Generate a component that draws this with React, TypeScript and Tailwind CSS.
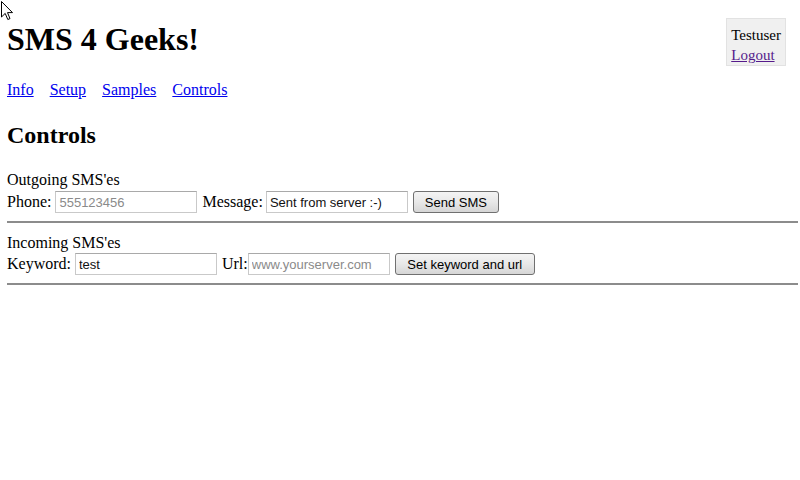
import React from 'react';

const inputCls =
  "h-[22px] w-[142px] border border-[#c9c9c9] border-t-[#a9a9a9] bg-white px-[3px] text-[13px] text-[#111] font-['Liberation_Sans',Arial,sans-serif] placeholder:text-[#8a8a8a] outline-none";

const buttonCls =
  "h-[22px] rounded-[3px] border border-[#707070] bg-gradient-to-b from-[#f4f4f4] via-[#e8e8e8] to-[#d6d6d6] text-[13px] text-black font-['Liberation_Sans',Arial,sans-serif] leading-none";

const Cursor = () => (
  <svg className="absolute left-[1px] top-[1px]" width="13" height="20" viewBox="0 0 13 20">
    <path d="M0.5 0.5 L0.5 16 L4.2 12.4 L6.8 18.5 L9 17.6 L6.5 11.6 L11.5 11.6 Z" fill="white" stroke="black" strokeWidth="1" strokeLinejoin="round" />
  </svg>
);

export default function App() {
  return (
    <div className="relative h-[480px] w-[800px] overflow-hidden bg-white pl-[7px] pr-[2px] font-['Liberation_Serif','Times_New_Roman',serif] text-[16px] text-black">
      <Cursor />

      <div className="relative">
        <h1 className="pt-[21px] text-[32px] font-bold leading-[37px]">SMS 4 Geeks!</h1>
        <div className="absolute right-[12px] top-[18px] h-[48px] border border-[#e2e2e2] bg-[#f0f0f0] px-[4px] pt-[6px] text-[15px] leading-[20px]">
          <div>Testuser</div>
          <a href="#" className="text-[#551a8b] underline">Logout</a>
        </div>
      </div>

      <nav className="mt-[23px] flex gap-[16px] leading-[18px]">
        {['Info', 'Setup', 'Samples', 'Controls'].map((l) => (
          <a key={l} href="#" className="text-[#0000ee] underline">{l}</a>
        ))}
      </nav>

      <h2 className="mt-[22px] text-[24px] font-bold leading-[28px]">Controls</h2>

      <div className="mt-[22px] leading-[18px]">Outgoing SMS'es</div>
      <div className="mt-[2px] flex items-center leading-[18px]">
        <span>Phone:</span>
        <input className={`ml-[4px] ${inputCls}`} placeholder="555123456" />
        <span className="ml-[5px]">Message:</span>
        <input className={`ml-[3px] ${inputCls}`} defaultValue="Sent from server :-)" />
        <button className={`ml-[5px] w-[86px] ${buttonCls}`}>Send SMS</button>
      </div>
      <hr className="mt-[8px] border-0 border-t-[2px] border-[#8c8c8c]" />

      <div className="mt-[11px] leading-[18px]">Incoming SMS'es</div>
      <div className="mt-[1px] flex items-center leading-[18px]">
        <span>Keyword:</span>
        <input className={`ml-[4px] ${inputCls}`} defaultValue="test" />
        <span className="ml-[5px]">Url:</span>
        <input className={`ml-0 ${inputCls}`} placeholder="www.yourserver.com" />
        <button className={`ml-[5px] w-[140px] ${buttonCls}`}>Set keyword and url</button>
      </div>
      <hr className="mt-[8px] border-0 border-t-[2px] border-[#8c8c8c]" />
    </div>
  );
}
